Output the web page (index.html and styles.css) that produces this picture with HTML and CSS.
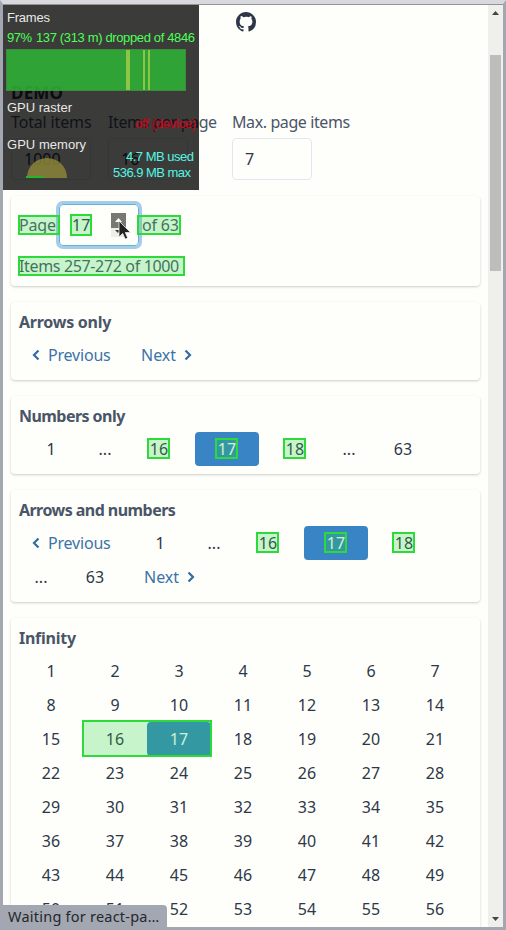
FILE: index.html
```html
<!DOCTYPE html>
<html lang="en">
<head>
<meta charset="utf-8">
<title>Pagination demo</title>
<link rel="stylesheet" href="styles.css">
</head>
<body>
<div class="window">
  <main class="page">
    <header class="header">
      <svg class="github" viewBox="0 0 16 16"><path d="M8 0C3.58 0 0 3.58 0 8c0 3.54 2.29 6.53 5.47 7.59.4.07.55-.17.55-.38 0-.19-.01-.82-.01-1.49-2.01.37-2.53-.49-2.69-.94-.09-.23-.48-.94-.82-1.13-.28-.15-.68-.52-.01-.53.63-.01 1.08.58 1.23.82.72 1.21 1.87.87 2.33.66.07-.52.28-.87.51-1.07-1.78-.2-3.64-.89-3.64-3.95 0-.87.31-1.59.82-2.15-.08-.2-.36-1.02.08-2.12 0 0 .67-.21 2.2.82A7.6 7.6 0 0 1 8 3.87c.68 0 1.36.09 2 .27 1.53-1.04 2.2-.82 2.2-.82.44 1.1.16 1.92.08 2.12.51.56.82 1.27.82 2.15 0 3.07-1.87 3.75-3.65 3.95.29.25.54.73.54 1.48 0 1.07-.01 1.93-.01 2.2 0 .21.15.46.55.38A8.01 8.01 0 0 0 16 8c0-4.42-3.58-8-8-8z"/></svg>
    </header>
    <h1 class="title">DEMO</h1>
    <div class="fields">
      <label class="field total"><span>Total items</span><span class="input">1000</span></label>
      <label class="field per"><span>Items per page</span><span class="input">16</span></label>
      <label class="field max"><span>Max. page items</span><span class="input">7</span></label>
    </div>

    <section class="card info">
      <div class="pager-row">
        <span class="word paint w-page">Page</span>
        <span class="input focus"><span class="paint w-num">17</span><i class="caret"></i>
          <svg class="spinner" viewBox="0 0 20 30"><path fill="#777773" d="M0 0h15v15H0z"/><path fill="#eeeeeb" d="M0 15h15v9H0z"/><path fill="#fff" d="M4 9l3.500-4L11 9z"/><path fill="#333" d="M4 17h5l-2 3z"/><path fill="#222" stroke="#eee" stroke-width=".8" d="M8 8v16l3.700-3.600 2.500 5.700 2.500-1.100-2.400-5.500h5.200z"/></svg>
        </span>
        <span class="word paint w-of">of 63</span>
      </div>
      <div><span class="word paint w-items">Items 257-272 of 1000</span></div>
    </section>

    <section class="card">
      <h2>Arrows only</h2>
      <div class="row">
        <a class="arrow prev"><svg viewBox="0 0 8 12"><path d="M6.500 1.500 2 6l4.500 4.500"/></svg><span>Previous</span></a>
        <a class="arrow next"><span>Next</span><svg viewBox="0 0 8 12"><path d="M1.500 1.500 6 6l-4.500 4.500"/></svg></a>
      </div>
    </section>

    <section class="card">
      <h2 class="tight">Numbers only</h2>
      <div class="row">
        <a class="num">1</a><span class="dots">...</span><a class="num"><span class="paint">16</span></a><a class="num active spaced"><span class="paint">17</span></a><a class="num"><span class="paint">18</span></a><span class="dots">...</span><a class="num">63</a>
      </div>
    </section>

    <section class="card">
      <h2 class="tight">Arrows and numbers</h2>
      <div class="row">
        <a class="arrow prev wide"><svg viewBox="0 0 8 12"><path d="M6.500 1.500 2 6l4.500 4.500"/></svg><span>Previous</span></a><a class="num">1</a><span class="dots">...</span><a class="num"><span class="paint">16</span></a><a class="num active spaced"><span class="paint">17</span></a><a class="num"><span class="paint">18</span></a><span class="dots">...</span><a class="num">63</a><a class="arrow next"><span>Next</span><svg viewBox="0 0 8 12"><path d="M1.500 1.500 6 6l-4.500 4.500"/></svg></a>
      </div>
    </section>

    <section class="card">
      <h2>Infinity</h2>
      <div class="row">
        <a class="num">1</a><a class="num">2</a><a class="num">3</a><a class="num">4</a><a class="num">5</a><a class="num">6</a><a class="num">7</a>
        <a class="num">8</a><a class="num">9</a><a class="num">10</a><a class="num">11</a><a class="num">12</a><a class="num">13</a><a class="num">14</a>
        <a class="num">15</a><span class="pair"><a class="num">16</a><a class="num active">17</a></span><a class="num">18</a><a class="num">19</a><a class="num">20</a><a class="num">21</a>
        <a class="num">22</a><a class="num">23</a><a class="num">24</a><a class="num">25</a><a class="num">26</a><a class="num">27</a><a class="num">28</a>
        <a class="num">29</a><a class="num">30</a><a class="num">31</a><a class="num">32</a><a class="num">33</a><a class="num">34</a><a class="num">35</a>
        <a class="num">36</a><a class="num">37</a><a class="num">38</a><a class="num">39</a><a class="num">40</a><a class="num">41</a><a class="num">42</a>
        <a class="num">43</a><a class="num">44</a><a class="num">45</a><a class="num">46</a><a class="num">47</a><a class="num">48</a><a class="num">49</a>
        <a class="num">50</a><a class="num">51</a><a class="num">52</a><a class="num">53</a><a class="num">54</a><a class="num">55</a><a class="num">56</a>
      </div>
    </section>
  </main>
  <div class="scrollbar">
    <svg viewBox="0 0 7 4"><path d="M3.500 0 7 4H0z"/></svg>
    <div class="track"><div class="thumb"></div></div>
    <svg viewBox="0 0 7 4"><path d="M0 0h7L3.500 4z"/></svg>
  </div>
</div>

<svg class="hud" viewBox="3 5 196 185">
  <rect class="hud-bg" x="3" y="5" width="196" height="185"/>
  <rect class="graph" x="6.500" y="49.500" width="179" height="41"/>
  <path class="stripes" d="M126 50h4v40h-4zM143 50h2v40h-2zM148 50h2v40h-2z"/>
  <path class="dome" d="M27 178a20 20 0 0 1 40 0z"/>
  <path class="level" d="M26 176h16l4 2H26z"/>
  <text class="w" x="7" y="22" textLength="43">Frames</text>
  <text class="g" x="7" y="42" textLength="25">97%</text>
  <text class="g" x="36" y="42" textLength="159">137 (313 m) dropped of 4846</text>
  <text class="w" x="7" y="112" textLength="65">GPU raster</text>
  <text class="r" x="135" y="128" textLength="61">off (device)</text>
  <text class="w" x="7" y="149" textLength="79">GPU memory</text>
  <text class="c" x="126" y="161" textLength="68">4.7 MB used</text>
  <text class="c" x="113" y="177" textLength="78">536.9 MB max</text>
</svg>
<div class="status">Waiting for react-pa…</div>
</body>
</html>
```
FILE: styles.css
```css
* { box-sizing: border-box; }
body {
  margin: 0;
  height: 930px;
  overflow: hidden;
  position: relative;
  font: 16px/24px "Noto Sans", sans-serif;
  color: #2d3748;
}
.window {
  display: flex;
  height: 930px;
  border: 3px solid #a3a7b2;
  border-top: 4px solid #d8d9dc;
  background: #fefffb;
}
.page {
  flex: 1;
  padding: 0 8px;
  overflow: hidden;
  border-top: 1px solid #929297;
}
.header { height: 76px; padding-top: 7px; text-align: center; }
.github { width: 20px; height: 20px; display: block; margin: 0 auto; fill: #2d3748; }
h1, h2 { margin: 0; font-size: 16px; line-height: 24px; color: #4a5568; font-weight: 700; }
.title { color: #2d3748; height: 29px; font-size: 17px; letter-spacing: .2px; }
.fields { display: flex; gap: 16px; height: 86px; color: #4a5568; }
.field { display: flex; flex-direction: column; gap: 4px; white-space: nowrap; }
.total { width: 81px; letter-spacing: -.15px; }
.per { width: 108px; letter-spacing: -.4px; }
.max { letter-spacing: -.4px; }
.input {
  display: flex;
  width: 80px;
  height: 42px;
  padding: 8px 12px;
  border: 1px solid #e2e8f0;
  border-radius: 4px;
  color: #2d3748;
  letter-spacing: 0;
}
.card {
  margin-bottom: 16px;
  width: 469px;
  padding: 8px;
  border-radius: 4px;
  box-shadow: 0 1px 3px rgba(0,0,0,.13), 0 1px 2px rgba(0,0,0,.08);
}
.info { height: 90px; color: #4a5568; }
.pager-row { display: flex; align-items: center; height: 42px; margin-bottom: 8px; }
.focus {
  position: relative;
  align-items: center;
  border-color: #63b3dc;
  box-shadow: 0 0 0 3px #a5cce9;
}
.caret { width: 1px; height: 17px; background: #222; }
.spinner { position: absolute; left: 51px; top: 8px; width: 20px; height: 30px; }
.word { display: inline-block; white-space: nowrap; }
.w-page { width: 40px; z-index: 1; letter-spacing: -.2px; }
.w-of { width: 40px; margin-left: 3px; letter-spacing: -.2px; }
.w-items { width: 164px; letter-spacing: -.35px; }
.paint { position: relative; }
.paint::after, .pair::after {
  content: "";
  position: absolute;
  inset: 1px -3px;
  border: 2px solid #2dda39;
  background: rgba(40, 210, 60, .25);
}
.w-page::after { inset: 2px -1px; }
.w-num::after { inset: 1px -2px; }
.w-of::after { inset: 2px 1px 2px -5px; }
.w-items::after { inset: 2px -2px 2px -1px; }
h2 { margin-bottom: 4px; letter-spacing: -.25px; }
.tight { letter-spacing: -.55px; }
.row { display: flex; flex-wrap: wrap; }
.num, .dots, .arrow { height: 34px; line-height: 34px; text-align: center; }
.num { width: 64px; }
.num .paint { display: inline-block; height: 22px; line-height: 22px; }
.num .paint::after { inset: 0 -2px 1px -3px; }
.dots { width: 44px; }
.active { background: #3884c4; color: #fff; border-radius: 4px; }
.spaced { margin: 0 4px; }
.arrow { display: flex; align-items: center; color: #3b73a8; }
.arrow svg { width: 8px; height: 12px; fill: none; stroke: #326ca4; stroke-width: 2.2; }
.prev { width: 105px; padding-left: 13px; gap: 8px; letter-spacing: -.2px; }
.wide { width: 109px; }
.next { padding: 0 12px 0 17px; gap: 8px; }
.pair { position: relative; display: flex; }
.pair::after { inset: -2px -1px -1px; }
.scrollbar {
  width: 15px;
  background: #eff0ec;
  border-top: 1px solid #929297;
  display: flex;
  flex-direction: column;
  align-items: center;
  padding: 6px 0;
}
.scrollbar svg { width: 7px; height: 4px; fill: #444; }
.track { flex: 1; padding-top: 40px; }
.thumb { width: 11px; height: 216px; background: #bdbebb; }
.hud {
  position: absolute;
  left: 3px;
  top: 5px;
  width: 196px;
  height: 185px;
  font: 13px "Liberation Sans", sans-serif;
}
.hud-bg { fill: rgba(0,0,0,.77); }
.graph { fill: rgba(45,180,53,.86); stroke: #3d8b3c; }
.stripes { fill: #8ec544; }
.dome { fill: rgba(145,138,58,.8); }
.level { fill: #25b52a; }
.w { fill: #e8e8e6; }
.g { fill: #4cff57; }
.r { fill: #b80d20; stroke: #b80d20; stroke-width: .4px; }
.c { fill: #55f5e2; }
.status {
  position: absolute;
  left: 3px;
  bottom: 0;
  width: 164px;
  height: 25px;
  padding-left: 5px;
  border-radius: 0 4px 0 0;
  background: #a3a7b2;
  color: #25272b;
  font-size: 14.500px;
  letter-spacing: .23px;
  line-height: 22px;
  white-space: nowrap;
}
```
